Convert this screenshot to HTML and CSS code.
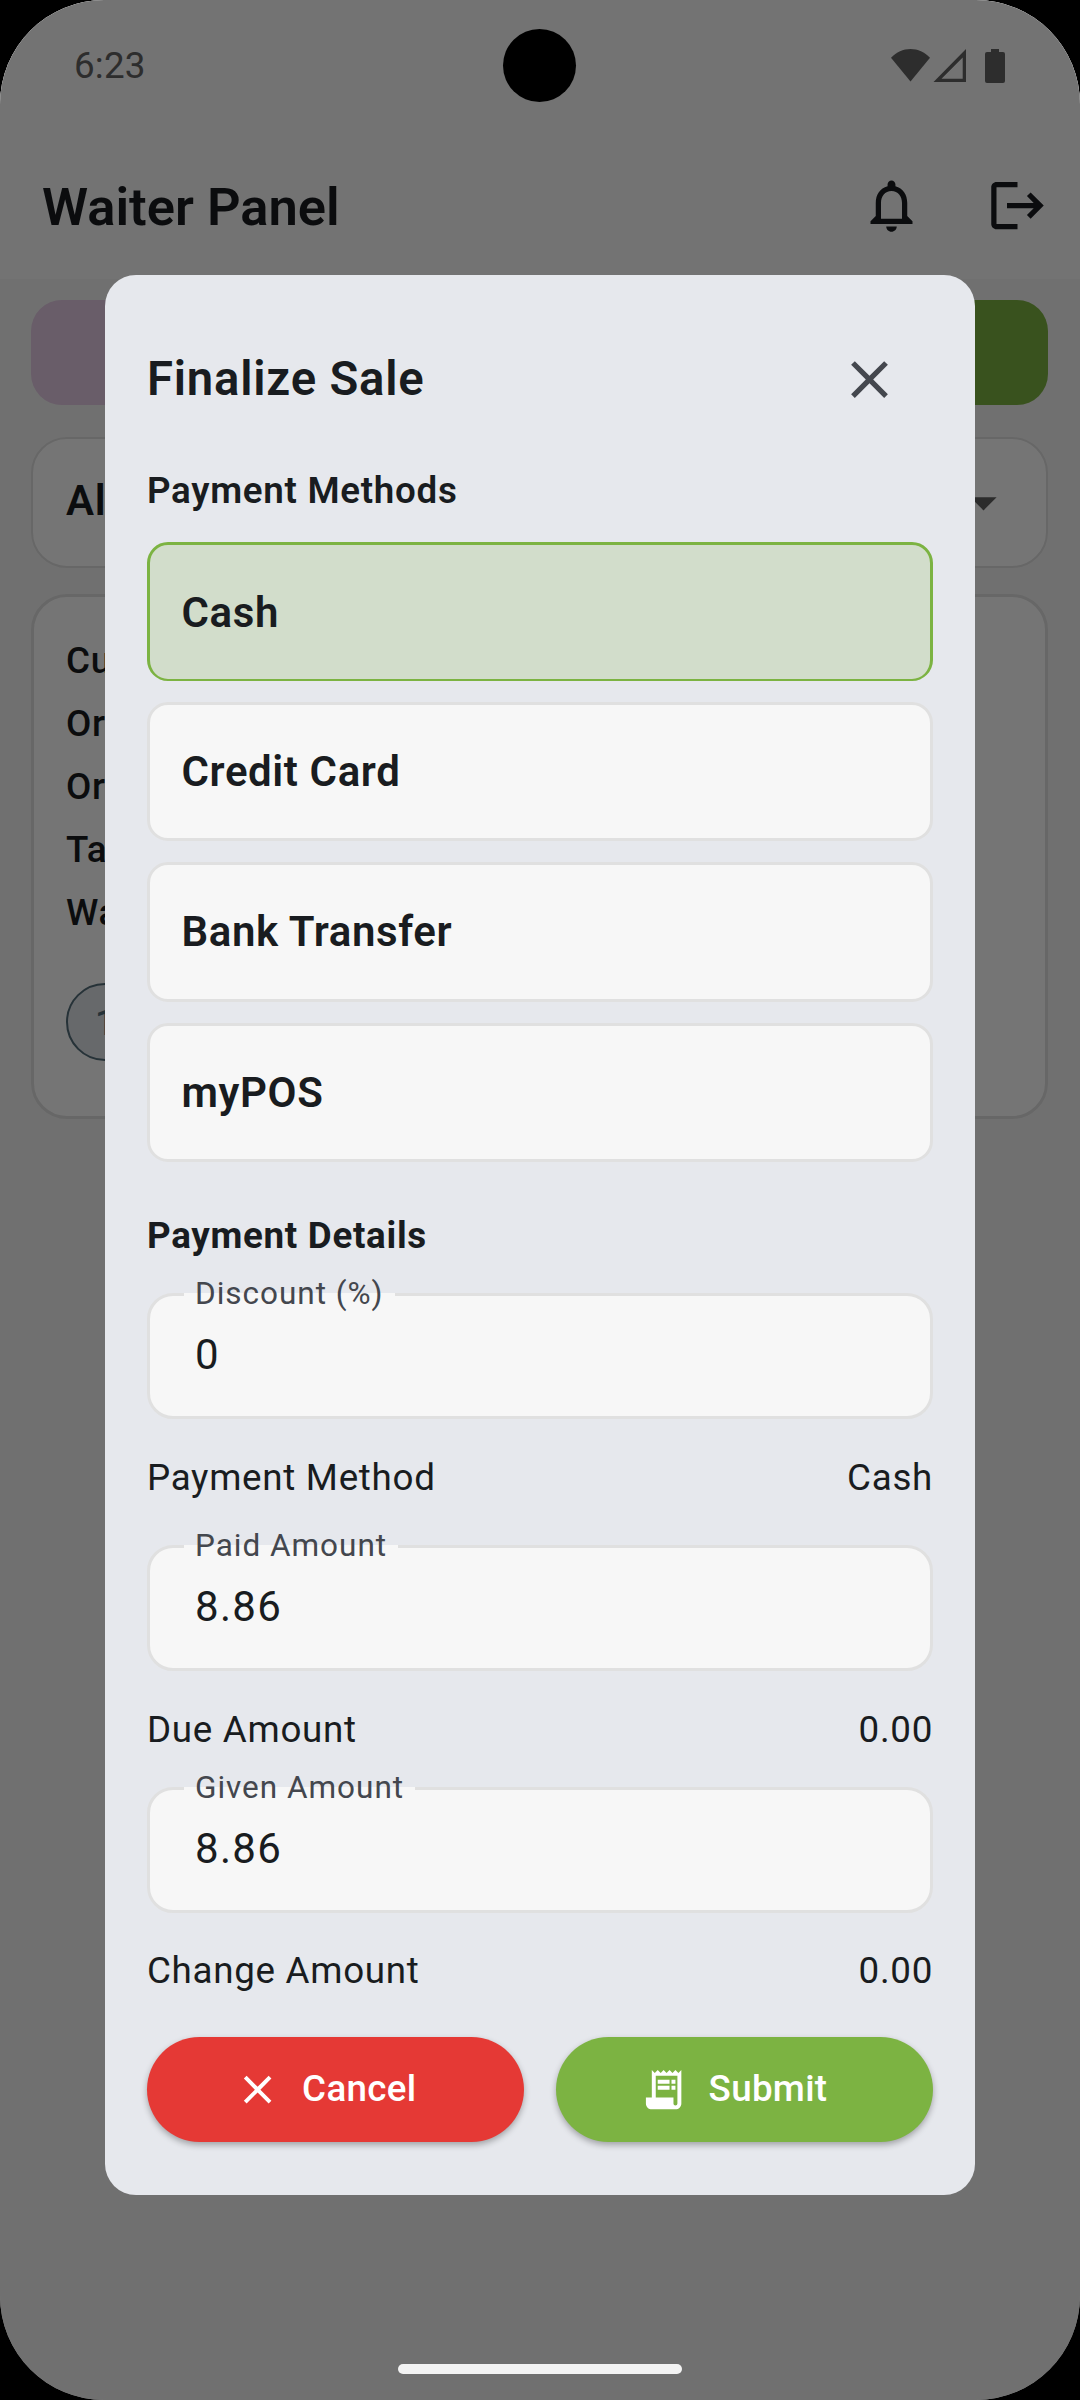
FILE: index.html
```
<!DOCTYPE html>
<html lang="en">
<head>
  <meta charset="UTF-8">
  <meta name="viewport" content="width=device-width, initial-scale=1.0">
  <title>Waiter Panel</title>
  <link rel="stylesheet" href="styles.css">
</head>
<body>

<div class="screen">

  <div class="status-bar">
    <span class="time">6:23</span>
    <svg class="status-icons" width="114" height="34" viewBox="0 0 114 34">
      <path d="M0 8.8C5.5 3 12 0 19.5 0S33.5 3 39 8.8L19.5 32.5z"/>
      <path d="M75 0v33H42.5zM71.7 8.5L50.5 29.7h21.2z" fill-rule="evenodd"/>
      <path d="M100 0h8v3h4q2 0 2 2v27q0 2-2 2h-16q-2 0-2-2V5q0-2 2-2h4z"/>
    </svg>
  </div>

  <div class="app-bar">
    <h1>Waiter Panel</h1>
    <div class="actions">
      <svg class="icon" viewBox="0 0 24 24"><path d="M12 22c1.1 0 2-.9 2-2h-4c0 1.1.89 2 2 2zm6-6v-5c0-3.07-1.64-5.64-4.5-6.32V4c0-.83-.67-1.5-1.5-1.5s-1.5.67-1.5 1.5v.68C7.63 5.36 6 7.92 6 11v5l-2 2v1h16v-1l-2-2zm-2 1H8v-6c0-2.48 1.51-4.5 4-4.5s4 2.02 4 4.5v6z"/></svg>
      <svg class="icon" viewBox="0 0 24 24"><path d="M17 7l-1.41 1.41L18.17 11H8v2h10.17l-2.58 2.58L17 17l5-5zM4 5h8V3H4c-1.1 0-2 .9-2 2v14c0 1.1.9 2 2 2h8v-2H4V5z"/></svg>
    </div>
  </div>

  <div class="content">
    <div class="tabs">
      <div class="tab"></div>
      <div class="tab active"></div>
    </div>
    <div class="filter">
      <span>All</span>
      <svg class="icon" viewBox="0 0 24 24"><path d="M7 10l5 5 5-5z"/></svg>
    </div>
    <div class="order">
      <p>Cust</p>
      <p>Order</p>
      <p>Order</p>
      <p>Table</p>
      <p>Wait</p>
      <span class="chip">1</span>
    </div>
  </div>

  <div class="overlay">
    <div class="dialog">
      <div class="dialog-header">
        <h2>Finalize Sale</h2>
        <button class="close">
          <svg class="icon" viewBox="0 0 24 24"><path d="M19 6.41L17.59 5 12 10.59 6.41 5 5 6.41 10.59 12 5 17.59 6.41 19 12 13.41 17.59 19 19 17.59 13.41 12z"/></svg>
        </button>
      </div>

      <h3>Payment Methods</h3>
      <div class="methods">
        <div class="method selected">Cash</div>
        <div class="method">Credit Card</div>
        <div class="method">Bank Transfer</div>
        <div class="method">myPOS</div>
      </div>

      <h3 class="details-title">Payment Details</h3>
      <div class="field">
        <label>Discount (%)</label>
        <span>0</span>
      </div>
      <div class="row">
        <span>Payment Method</span>
        <span>Cash</span>
      </div>
      <div class="field field-paid">
        <label>Paid Amount</label>
        <span>8.86</span>
      </div>
      <div class="row">
        <span>Due Amount</span>
        <span>0.00</span>
      </div>
      <div class="field">
        <label>Given Amount</label>
        <span>8.86</span>
      </div>
      <div class="row row-change">
        <span>Change Amount</span>
        <span>0.00</span>
      </div>

      <div class="buttons">
        <button class="btn cancel">
          <svg viewBox="0 0 24 24"><path d="M19 6.41L17.59 5 12 10.59 6.41 5 5 6.41 10.59 12 5 17.59 6.41 19 12 13.41 17.59 19 19 17.59 13.41 12z"/></svg>
          Cancel
        </button>
        <button class="btn submit">
          <svg viewBox="0 0 24 24"><path d="M19.5 3.5L18 2l-1.5 1.5L15 2l-1.5 1.5L12 2l-1.5 1.5L9 2 7.5 3.5 6 2v14H3v3c0 1.66 1.34 3 3 3h12c1.66 0 3-1.34 3-3V2l-1.5 1.5zM19 19c0 .55-.45 1-1 1s-1-.45-1-1v-3H8V5h11v14zM9 7h6v2H9zM16 7h2v2h-2zM9 10h6v2H9zM16 10h2v2h-2z"/></svg>
          Submit
        </button>
      </div>
    </div>
  </div>

  <div class="camera"></div>
  <div class="home-bar"></div>
</div>

</body>
</html>
```
FILE: styles.css
```
body {
  font-family: Roboto, sans-serif;
  margin: 0;
  background-color: #000;
  color: #191c20;
}

h1, h2, h3, p {
  margin: 0;
}

.screen {
  position: relative;
  width: 1080px;
  height: 2400px;
  overflow: hidden;
  border-radius: 104px;
  background-color: #f5f5f5;
}

.icon {
  display: block;
  width: 63px;
  height: 63px;
  fill: currentColor;
}

/* status bar + app bar */
.status-bar {
  display: flex;
  justify-content: space-between;
  align-items: center;
  box-sizing: border-box;
  height: 132px;
  padding: 0 75px 0 74px;
  background-color: #fafafa;
  color: #626262;
}

.time {
  font-size: 36.75px;
  line-height: 44px;
  letter-spacing: 0.2px;
}

.status-icons {
  fill: currentColor;
}

.app-bar {
  display: flex;
  justify-content: space-between;
  align-items: center;
  box-sizing: border-box;
  height: 147px;
  padding: 0 31px 0 42px;
  background-color: #fafafa;
}

.app-bar h1 {
  padding-top: 3px;
  font-size: 52.5px;
  line-height: 62px;
  font-weight: 600;
}

.actions {
  display: flex;
  gap: 63px;
}

/* page behind the dialog */
.content {
  padding: 21px 32px 21px 31px;
}

.tabs {
  display: flex;
  gap: 21px;
}

.tab {
  flex: 1;
  height: 105px;
  border-radius: 31px;
  background-color: #e4cae4;
}

.tab.active {
  background-color: #7cb342;
}

.filter {
  display: flex;
  justify-content: space-between;
  align-items: center;
  box-sizing: border-box;
  height: 131px;
  margin-top: 32px;
  padding: 0 31px 0 33px;
  border: 2px solid #e0e0e0;
  border-radius: 36px;
  background-color: #fff;
  font-size: 42px;
  font-weight: 600;
  letter-spacing: 0.6px;
}

.filter span {
  line-height: 50px;
  padding-bottom: 3px;
}

.filter .icon {
  color: #616161;
}

.order {
  box-sizing: border-box;
  height: 525px;
  margin-top: 26px;
  padding: 32px;
  border: 3px solid #e0e0e0;
  border-radius: 36px;
  background-color: #fff;
  font-size: 36.75px;
  font-weight: 500;
  letter-spacing: 0.7px;
}

.order p {
  line-height: 63px;
}

.chip {
  display: flex;
  align-items: center;
  box-sizing: border-box;
  width: 200px;
  height: 78px;
  margin-top: 39px;
  padding-left: 27px;
  border: 2px solid #546e7a;
  border-radius: 39px;
  background-color: #e1e4ea;
  color: #546e7a;
}

/* dialog */
.overlay {
  position: absolute;
  top: 0;
  left: 0;
  right: 0;
  bottom: 0;
  padding-top: 275px;
  background-color: rgba(0, 0, 0, 0.54);
}

.dialog {
  box-sizing: border-box;
  width: 870px;
  height: 1920px;
  margin: 0 auto;
  padding: 42px;
  border-radius: 31px;
  background-color: #e6e8ed;
}

.dialog-header {
  display: flex;
  justify-content: space-between;
  align-items: center;
  height: 124px;
}

.dialog-header h2 {
  font-size: 47.25px;
  line-height: 56px;
  font-weight: 600;
  letter-spacing: 0.8px;
}

.close {
  width: 126px;
  height: 126px;
  padding: 0 32px 0 31px;
  border: none;
  background: none;
  color: #44474e;
}

h3 {
  margin-top: 27px;
  font-size: 36.75px;
  line-height: 45px;
  font-weight: 600;
  letter-spacing: 0.7px;
}

h3.details-title {
  margin-top: 51px;
  font-weight: 700;
}

.methods {
  display: flex;
  flex-direction: column;
  gap: 21px;
  margin-top: 29px;
}

.method {
  display: flex;
  align-items: center;
  box-sizing: border-box;
  height: 139.2px;
  padding-left: 31.5px;
  border: 3px solid #e0e0e0;
  border-radius: 21px;
  background-color: #f7f7f7;
  font-size: 42px;
  font-weight: 600;
  letter-spacing: 0.6px;
}

.method.selected {
  border-color: #7cb342;
  border-bottom-width: 2px;
  background-color: #d2ddcb;
}

.field {
  position: relative;
  box-sizing: border-box;
  height: 126px;
  margin-top: 35px;
  padding: 34px 45px;
  border: 3px solid #e0e0e0;
  border-radius: 26px;
  background-color: #f7f7f7;
  font-size: 42px;
  line-height: 50px;
  letter-spacing: 1.3px;
}

.field-paid {
  margin-top: 45px;
}

/* the lower half of the label hides the border */
.field label {
  position: absolute;
  left: 34px;
  top: -21px;
  padding: 0 11px;
  font-size: 31.5px;
  line-height: 37px;
  letter-spacing: 0.98px;
  color: #44474e;
  background: linear-gradient(transparent 18px, #f7f7f7 18px);
}

.row {
  display: flex;
  justify-content: space-between;
  margin-top: 36px;
  font-size: 36.75px;
  line-height: 45px;
  letter-spacing: 0.7px;
}

.row-change {
  margin-top: 35px;
}

.buttons {
  display: flex;
  gap: 31.5px;
  margin-top: 44px;
}

.btn {
  display: flex;
  flex: 1;
  justify-content: center;
  align-items: center;
  gap: 21px;
  height: 105px;
  padding: 0 21px 0 0;
  border: none;
  border-radius: 53px;
  color: #fff;
  font: 500 36.75px/44px Roboto, sans-serif;
  letter-spacing: 0.3px;
  box-shadow: 0 3px 6px rgba(0, 0, 0, 0.3);
}

.btn svg {
  width: 47.25px;
  height: 47.25px;
  fill: #fff;
}

.cancel {
  background-color: #e53935;
}

.submit {
  background-color: #7cb342;
}

/* device overlays */
.camera {
  position: absolute;
  left: 503px;
  top: 29px;
  width: 73px;
  height: 73px;
  border-radius: 50%;
  background-color: #000;
}

.home-bar {
  position: absolute;
  left: 398px;
  bottom: 26px;
  width: 284px;
  height: 10px;
  border-radius: 5px;
  background-color: #f3f3f3;
}
```
